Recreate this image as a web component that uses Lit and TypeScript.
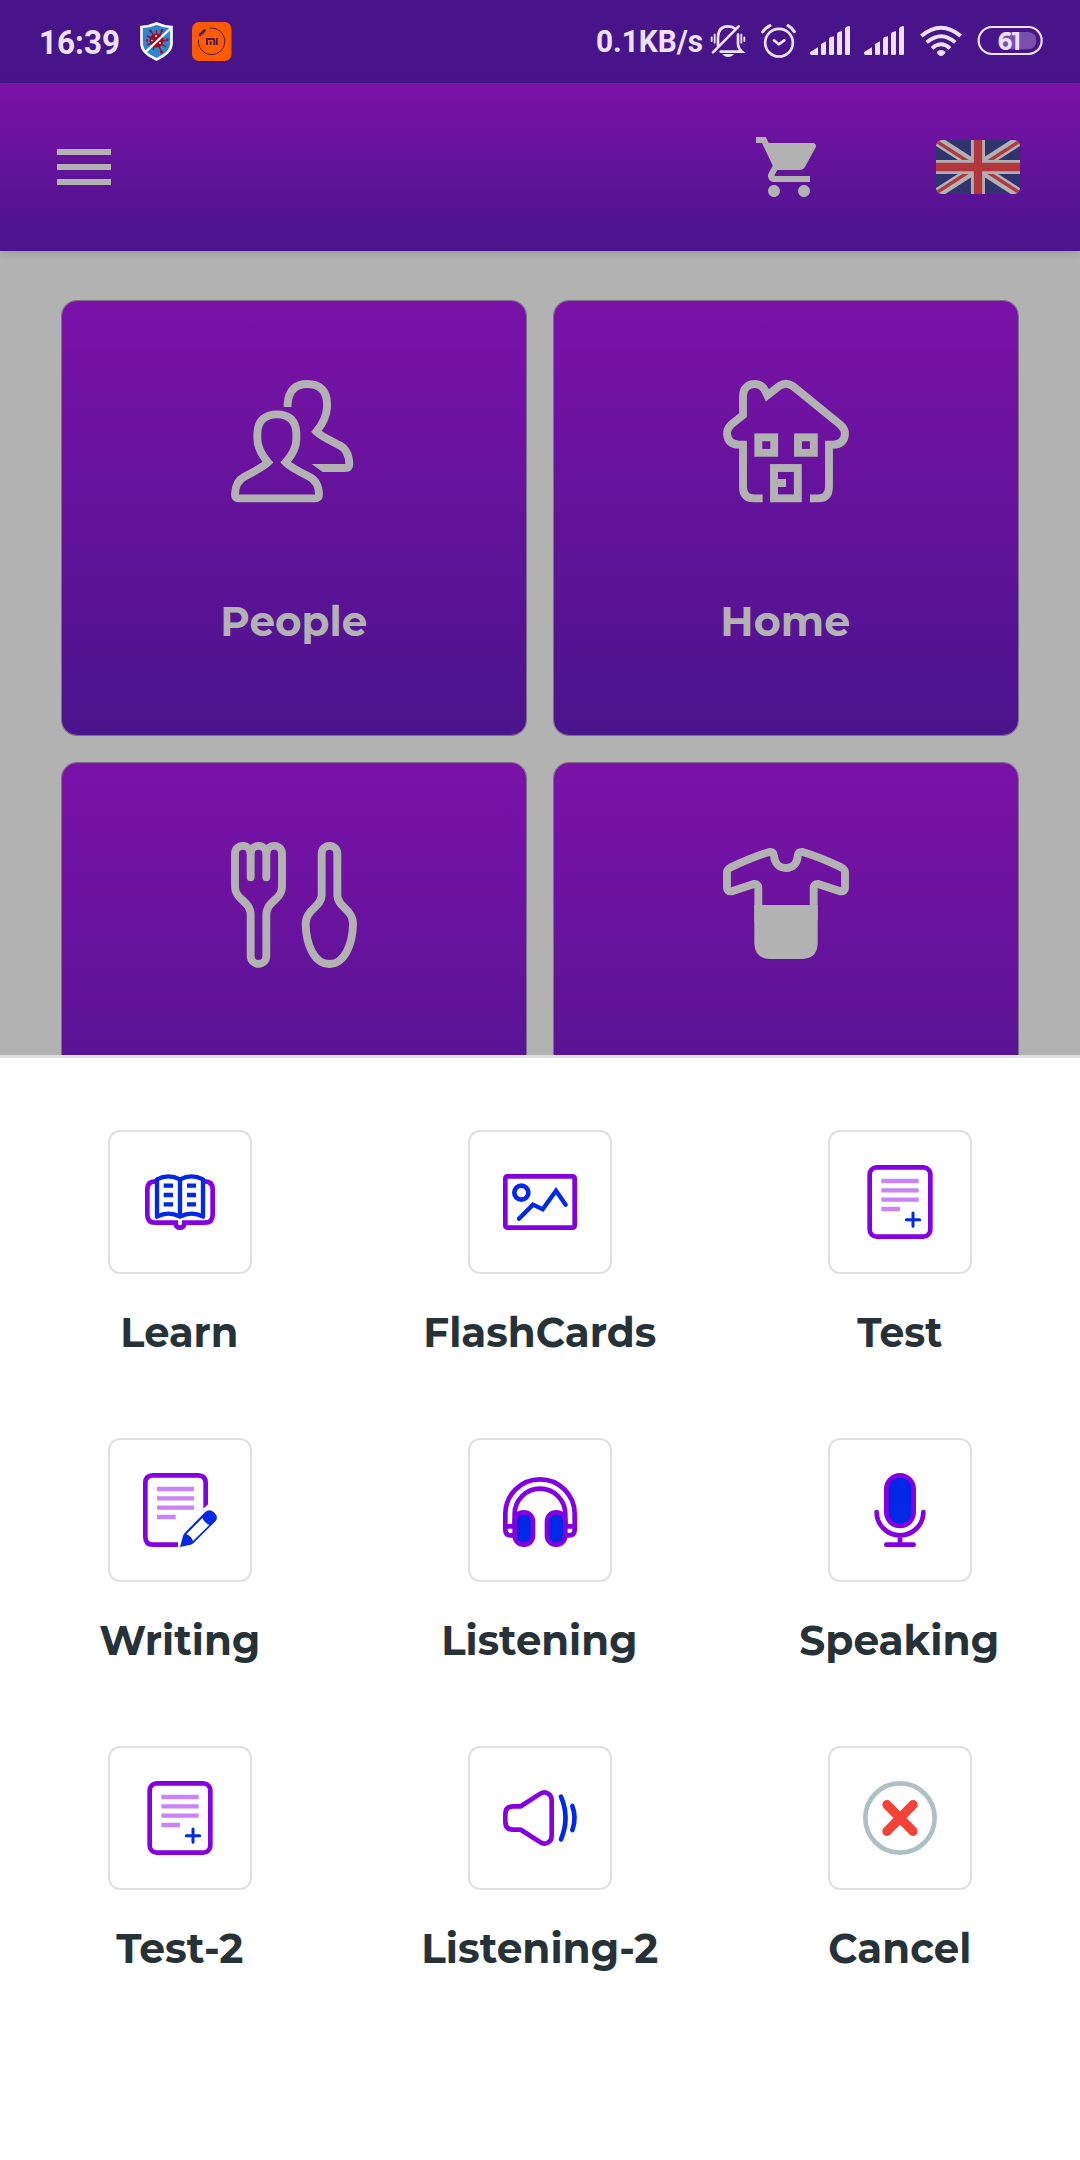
import { LitElement, html, svg, css, type TemplateResult } from "lit";
import { customElement, property } from "lit/decorators.js";

type Art = ReturnType<typeof svg>;

/* ---------- category artwork, 378 units across, drawn at 126px ---------- */

const people: Art = svg`
  <g fill="none" stroke="currentColor" stroke-width="23.6" transform="translate(-573 -300)">
    <path d="M684 547C664 524 652 500 652 475V460C653 422 675 403 711 403C748 403 768 422 769 460V478C769 502 757 525 737 547Q750 561 808 590Q836 604 837 643Q837 655 825 655H597Q585 655 585 643Q586 604 613 590Q670 561 684 547Z"/>
    <path d="M743 381V372C745 331 767 312 802 312C840 312 861 333 861 372V382C860 408 848 432 829 455Q840 467 895 494C920 505 927 526 928 552Q928 564 916 564H850"/>
    <path d="M815 552H852V576H848Z" fill="currentColor" stroke="none"/>
  </g>`;

const home: Art = svg`
  <g fill="none" stroke="currentColor" stroke-width="23.6" transform="translate(-549 -300)">
    <path d="M668 655H643Q609 655 609 620V494H597Q564 493 561 462Q561 446 573 434L609 405V346A34 34 0 0 1 643 312Q667 312 677 335L682 346L718 318Q738 304 758 318L902 435Q915 447 915 462Q912 493 880 494H867V620Q867 655 833 655H810"/>
    <rect x="655" y="472" width="47.5" height="46.5"/>
    <rect x="774" y="472" width="47.5" height="46.5"/>
    <rect x="702" y="564" width="71.5" height="91"/>
    <rect x="712" y="597" width="26" height="24" fill="currentColor" stroke="none"/>
  </g>`;

const food: Art = svg`
  <g fill="none" stroke="currentColor" stroke-width="23.6" stroke-linecap="round" transform="translate(-573 -306)">
    <path d="M585 341a23.5 23.5 0 0 1 47 0a23.5 23.5 0 0 1 47 0a23.5 23.5 0 0 1 47 0V440C726 480 679 482 679 525V648a23.5 23.5 0 0 1-47 0V525C632 482 585 480 585 440Z"/>
    <path d="M632 335V412M679 335V412"/>
    <path d="M845 465V341a23.5 23.5 0 0 1 47 0V465C892 502 939 507 939 552C938 612 914 672 868 672C822 672 798 612 797 552C797 507 845 502 845 465Z"/>
  </g>`;

const clothes: Art = svg`
  <g fill="none" stroke="currentColor" stroke-width="23.6" transform="translate(-549 -306)">
    <path d="M655 545V444Q655 431 642 432L575 454Q561 456 561 443V397Q561 388 572 382Q640 350 688 336Q702 334 702 348C704 370 718 384 738 384C758 384 772 370 773 348Q774 334 788 336Q836 350 904 382Q915 388 915 397V443Q915 456 901 454L834 432Q821 431 821 444V540"/>
    <path d="M643 495H833V612Q831 655 788 657H688Q645 655 643 612Z" fill="currentColor" stroke="none"/>
  </g>`;

/* ---------- activity artwork, 252 units across centred on 0,0 ---------- */

const book: Art = svg`
  <g fill="none" stroke-width="14" transform="translate(-270 -276)">
    <path stroke="#8400e0" d="M204 214H196Q172 214 172 238V314Q172 338 196 338H257Q257 353 270 353Q283 353 283 338H344Q368 338 368 314V238Q368 214 344 214H336"/>
    <g stroke="#0028e6" stroke-width="13">
      <path stroke-linejoin="round" d="M201 208Q235 190 270 208Q305 190 339 208V320Q305 302 270 320Q235 302 201 320ZM270 208V320"/>
      <path d="M221 227H249M221 255H249M221 283H249M291 227H318M291 255H318M291 283H318"/>
    </g>
  </g>`;

const picture: Art = svg`
  <g fill="none" stroke-width="14">
    <rect x="-104" y="-77" width="208" height="154" rx="6" stroke="#8400e0"/>
    <circle cx="-56" cy="-28" r="21" stroke="#0028e6"/>
    <path d="M-63 50L-21 8L8 22L48-34L77 8" stroke="#0028e6" stroke-width="13" stroke-linecap="round"/>
  </g>`;

const exam: Art = svg`
  <g fill="none" stroke-width="13">
    <rect x="-91" y="-104" width="182" height="208" rx="21" stroke="#8400e0" stroke-width="14"/>
    <path stroke="#c884f8" d="M-56-63H56M-56-35H56M-56-7H56M-56 21H0"/>
    <path stroke="#0028e6" stroke-width="9" stroke-linecap="round" d="M19 53H59M39 33V73"/>
  </g>`;

const writing: Art = svg`
  <g fill="none" stroke-width="13" transform="translate(-270 -270)">
    <path stroke="#8400e0" stroke-width="14" d="M264 374H189Q166 374 166 351V189Q166 166 189 166H324Q347 166 347 189V266"/>
    <path fill="#fff" d="M338 268L356 251V272H338Z"/>
    <path stroke="#c884f8" d="M201 207H312M201 235H312M201 263H312M201 291H257"/>
    <path fill="#0028e6" d="M270 381L279 348Q281 342 286 337L345 277Q357 265 371 276Q387 290 377 303L313 367Q308 372 302 374Z"/>
    <path fill="#fff" d="M289 343L337 294Q343 308 358 315L309 363Q304 348 289 343Z"/>
  </g>`;

const headphones: Art = svg`
  <g fill="none" stroke="#8400e0" stroke-width="14">
    <path d="M-76 76H-88Q-104 76-104 60V12A104 104 0 0 1 104 12V60Q104 76 88 76H76"/>
    <path d="M-76 50V12A76 76 0 0 1 76 12V50"/>
    <path d="M-104 49H-76M76 49H104"/>
    <rect x="-76" y="7" width="55" height="97" rx="27" fill="#0028e6"/>
    <rect x="21" y="7" width="55" height="97" rx="27" fill="#0028e6"/>
  </g>`;

const mic: Art = svg`
  <g fill="none" stroke="#8400e0" stroke-width="14" stroke-linecap="round">
    <rect x="-41" y="-104" width="82" height="152" rx="41" fill="#0028e6"/>
    <path d="M-70 6A70 70 0 0 0 70 6M0 76V104M-41 104H41"/>
  </g>`;

const speaker: Art = svg`
  <g fill="none" stroke-width="14">
    <path stroke="#8400e0" d="M-58-35H-80Q-104-35-104-11V11Q-104 35-80 35H-58L1 73Q13 81 25 73Q35 67 35 53V-53Q35-67 25-73Q13-81 1-73Z"/>
    <path stroke="#0028e6" stroke-linecap="round" d="M63-64Q90 0 63 64M97-36Q110 0 97 36"/>
  </g>`;

const cancel: Art = svg`
  <circle r="104" fill="none" stroke="#b0bec5" stroke-width="14"/>
  <path d="M-39-40L39 40M39-40L-39 40" stroke="#f44336" stroke-width="28" stroke-linecap="round"/>`;

/* ---------- status bar artwork, three units to the pixel ---------- */

const muted: Art = svg`
  <g fill="none" stroke="currentColor" stroke-width="8" stroke-linecap="round">
    <path d="M474 142V112Q475 79 504 79Q518 79 526 86M459 157L536 79M534 104V132Q535 146 546 155H482"/>
    <path stroke-width="5.500" d="M455 112V123M464 103V128M544 103V128M553 112V123"/>
    <path fill="currentColor" stroke="none" d="M487 162H522Q516 171 504 171Q493 171 487 162Z"/>
  </g>`;

const alarm: Art = svg`
  <g fill="none" stroke="currentColor" stroke-width="8" stroke-linecap="round" stroke-linejoin="round">
    <circle cx="657" cy="128" r="41.500"/>
    <path d="M642 121L656 133L673 121"/>
    <path stroke-width="9" d="M608 96Q616 84 630 77M684 77Q697 84 703 95"/>
  </g>`;

const signal: Art = svg`
  <path fill="currentColor" d="M750 160Q750 156 754 154L774 142V165H755Q750 165 750 160ZM783 132L798 124V161Q798 165 794 165H787Q783 165 783 161ZM807 117Q808 113 812 111L822 109V161Q822 165 818 165H811Q807 165 807 161ZM831 102Q832 98 836 96L846 93V161Q846 165 842 165H835Q831 165 831 161ZM855 87Q856 82 860 80L867 78Q870 78 870 82V161Q870 165 866 165H859Q855 165 855 161Z"/>`;

const wifi: Art = svg`
  <g fill="none" stroke="currentColor" stroke-width="11.500">
    <path d="M1084 108Q1143 58 1202 108M1100 127Q1143 90 1186 127M1116 145Q1143 121 1170 145"/>
    <path fill="currentColor" stroke="none" d="M1130 156Q1143 144 1157 156Q1155 163 1147 167Q1143 169 1139 167Q1131 163 1130 156Z"/>
  </g>`;

const battery: Art = svg`
  <rect x="1256" y="81" width="189" height="81" rx="40" fill="none" stroke="currentColor" stroke-width="6.500"/>
  <path fill="#7b4fae" d="M1328 96H1403Q1429 98 1429 122Q1429 146 1403 148H1328Z"/>
  <text x="1313" y="149" textLength="70" lengthAdjust="spacingAndGlyphs" font-family="Montserrat, Roboto, sans-serif" font-weight="700" font-size="78" fill="currentColor">61</text>`;

@customElement("fit-label")
class FitLabel extends LitElement {
  @property() text = "";
  @property({ type: Number }) width = 100;

  static styles = css`
    :host { display: block; height: 60px; }
    .label { display: block; overflow: visible; }
    .text {
      font-family: Montserrat, Inter, "Open Sans", sans-serif;
      font-weight: 700;
      font-size: 42px;
      fill: currentColor;
    }
  `;

  render() {
    return html`<svg class="label" width=${this.width} height="60">
      <text class="text" x="-0.7" y="45" textLength=${this.width} lengthAdjust="spacingAndGlyphs">${this.text}</text>
    </svg>`;
  }
}

@customElement("status-bar")
class StatusBar extends LitElement {
  static styles = css`
    :host {
      display: flex;
      box-sizing: border-box;
      height: 83px;
      padding: 22px 37px 0 40px;
      justify-content: space-between;
      align-items: flex-start;
      background: #47148a;
      color: #eee2fb;
    }
    .side { display: flex; align-items: flex-start; }
    .right { gap: 14px; padding-top: 2px; }
    .icon, .time, .speed { display: block; overflow: visible; }
    .speed { margin-right: -6px; }
    .shield { margin-left: 20px; }
    .mi { margin-left: 19px; }
    .text { font-family: Roboto, sans-serif; font-weight: 700; fill: currentColor; }
    .clock { font-size: 33px; }
    .rate { font-size: 31px; }
  `;

  private icon(x: number, w: number, art: Art) {
    return html`<svg class="icon" width=${w} height="34" viewBox="${x} 72 ${w * 3} 102">${art}</svg>`;
  }

  render() {
    return html`
      <div class="side">
        <svg class="time" width="80" height="39">
          <text class="text clock" x="-1" y="32.3" textLength="81" lengthAdjust="spacingAndGlyphs">16:39</text>
        </svg>
        <svg class="icon shield" width="33" height="39" viewBox="0 0 33 39">
          <path d="M1.500 5Q10 4.500 16.500 1.500Q23 4.500 31.500 5V22Q31 31 16.500 37.500Q2 31 1.500 22Z" fill="#2f86cf" stroke="#fff" stroke-width="2.600"/>
          <circle cx="16.500" cy="18.500" r="7" fill="#b4000c"/>
          <path d="M16.500 18.500V8M16.500 18.500L11 9M16.500 18.500L22 9M16.500 18.500L7 14M16.500 18.500H28M16.500 18.500L7 23M16.500 18.500L13 28M16.500 18.500L21.500 30M16.500 18.500L26 25" stroke="#8d1238" stroke-width="1.400"/>
          <g fill="#9c1030"><circle cx="10.500" cy="9" r="1.500"/><circle cx="22" cy="8.500" r="1.500"/><circle cx="21.500" cy="30" r="1.700"/><circle cx="7" cy="18.500" r="1.200"/><circle cx="27.500" cy="17.500" r="1.200"/></g>
          <circle cx="16" cy="14" r="1.100" fill="#fff"/><circle cx="12" cy="18.500" r=".8" fill="#fff"/><circle cx="20" cy="21" r=".9" fill="#fff"/>
          <path d="M5.500 30L31 6" stroke="#fff" stroke-width="2.300"/>
        </svg>
        <svg class="icon mi" width="39.500" height="39" viewBox="0 0 39.500 39">
          <rect width="39.500" height="39" rx="7" fill="#ff5c00"/>
          <g fill="none" stroke="#4a1a5c">
            <path d="M17.500 6.300A13.200 13.200 0 1 1 6.500 17.500" stroke-width="1"/>
            <path d="M8 13L12.500 8.500" stroke-width="2.800" stroke-linecap="round"/>
            <path d="M15 23V17H21Q22.300 17 22.300 18.500V23M18.700 19.500V23M24.800 16V23" stroke-width="1.900"/>
          </g>
        </svg>
      </div>
      <div class="side right">
        <svg class="speed" width="107" height="34">
          <text class="text rate" x="0" y="28.300" textLength="107" lengthAdjust="spacingAndGlyphs">0.1KB/s</text>
        </svg>
        ${this.icon(453, 34, muted)} ${this.icon(597, 37, alarm)}
        ${this.icon(750, 40, signal)} ${this.icon(750, 40, signal)}
        ${this.icon(1074, 44, wifi)} ${this.icon(1248, 67, battery)}
      </div>
    `;
  }
}

@customElement("app-bar")
class AppBar extends LitElement {
  static styles = css`
    :host {
      display: flex;
      box-sizing: border-box;
      height: 168px;
      padding: 0 60px 0 48px;
      align-items: center;
      justify-content: space-between;
      background: linear-gradient(#7b12a8, #4a148c);
      box-shadow: 0 2px 8px rgba(0, 0, 0, 0.16);
      position: relative;
      color: #b2b2b2;
    }
    .icon { display: block; fill: currentColor; }
    .actions { display: flex; align-items: center; gap: 111px; }
    .flag { display: block; border-radius: 6px; }
  `;

  render() {
    return html`
      <svg class="icon" width="72" height="72" viewBox="0 0 24 24"><path d="M3 18h18v-2H3v2zm0-5h18v-2H3v2zm0-7v2h18V6H3z"/></svg>
      <div class="actions">
        <svg class="icon" width="72" height="72" viewBox="0 0 24 24">
          <path d="M7 18c-1.100 0-1.990.9-1.990 2S5.900 22 7 22s2-.9 2-2-.9-2-2-2zM1 2v2h2l3.600 7.590-1.350 2.450c-.16.28-.25.610-.25.960 0 1.100.9 2 2 2h12v-2H7.420c-.14 0-.25-.11-.25-.25l.03-.12.9-1.630h7.450c.75 0 1.410-.41 1.750-1.030l3.580-6.490c.08-.14.12-.31.12-.48 0-.55-.45-1-1-1H5.210l-.94-2H1zm16 16c-1.100 0-1.990.9-1.990 2s.89 2 1.990 2 2-.9 2-2-.9-2-2-2z"/>
        </svg>
        <svg class="flag" width="84" height="54" viewBox="0 0 252 162">
          <rect width="252" height="162" fill="#2f336e"/>
          <path d="M0 0L252 162M252 0L0 162" stroke="#b2b2b2" stroke-width="30"/>
          <path d="M0 3L126 84M252 3L126 84M0 159L126 78M252 159L126 78" stroke="#b0393f" stroke-width="10"/>
          <path d="M126 0V162M0 81H252" stroke="#b2aeb0" stroke-width="42"/>
          <path d="M126 0V162M0 81H252" stroke="#b2373d" stroke-width="25"/>
        </svg>
      </div>
    `;
  }
}

interface Entry { name: string; width: number; art: Art; }

const categories: Entry[] = [
  { name: "People", width: 147, art: people },
  { name: "Home", width: 130, art: home },
  { name: "", width: 0, art: food },
  { name: "", width: 0, art: clothes },
];

const activities: Entry[] = [
  { name: "Learn", width: 118, art: book },
  { name: "FlashCards", width: 233, art: picture },
  { name: "Test", width: 85, art: exam },
  { name: "Writing", width: 161, art: writing },
  { name: "Listening", width: 196, art: headphones },
  { name: "Speaking", width: 200, art: mic },
  { name: "Test-2", width: 127, art: exam },
  { name: "Listening-2", width: 237, art: speaker },
  { name: "Cancel", width: 143, art: cancel },
];

@customElement("app-root")
class AppRoot extends LitElement {
  static styles = css`
    :host { display: block; width: 1080px; height: 2160px; overflow: hidden; background: #fff; }
    .content {
      box-sizing: border-box;
      height: 804px;
      overflow: hidden;
      padding: 50px 62px 0;
      background: #b2b2b2;
      display: grid;
      grid-template-columns: 464px 464px;
      grid-auto-rows: 434px;
      gap: 28px;
    }
    .card {
      display: flex;
      flex-direction: column;
      align-items: center;
      box-sizing: border-box;
      padding-top: 79px;
      border-radius: 15px;
      background: linear-gradient(#7b12a8, #4a148c);
      box-shadow: 0 0 0 1px rgba(70, 40, 90, 0.5);
      color: #b2b2b2;
    }
    .glyph { display: block; overflow: visible; }
    .card fit-label { margin-top: 85px; }
    .sheet {
      box-sizing: border-box;
      height: 1105px;
      padding-top: 72px;
      border-top: 3px solid #e0e0e0;
      background: #fff;
      display: grid;
      grid-template-columns: repeat(3, 360px);
      grid-auto-rows: 308px;
    }
    .tile { display: flex; flex-direction: column; align-items: center; color: #263238; }
    .box {
      display: flex;
      align-items: center;
      justify-content: center;
      box-sizing: border-box;
      width: 144px;
      height: 144px;
      border: 2px solid #e0e0e0;
      border-radius: 12px;
    }
    .tile fit-label { margin-top: 28px; }
  `;

  private card(c: Entry): TemplateResult {
    return html`<div class="card">
      <svg class="glyph" width="126" height="126" viewBox="0 0 378 378">${c.art}</svg>
      ${c.name ? html`<fit-label .text=${c.name} .width=${c.width}></fit-label>` : ""}
    </div>`;
  }

  private tile(a: Entry): TemplateResult {
    return html`<div class="tile">
      <div class="box"><svg class="glyph" width="84" height="84" viewBox="-126 -126 252 252">${a.art}</svg></div>
      <fit-label .text=${a.name} .width=${a.width}></fit-label>
    </div>`;
  }

  render() {
    return html`
      <status-bar></status-bar>
      <app-bar></app-bar>
      <main class="content">${categories.map((c) => this.card(c))}</main>
      <section class="sheet">${activities.map((a) => this.tile(a))}</section>
    `;
  }
}
